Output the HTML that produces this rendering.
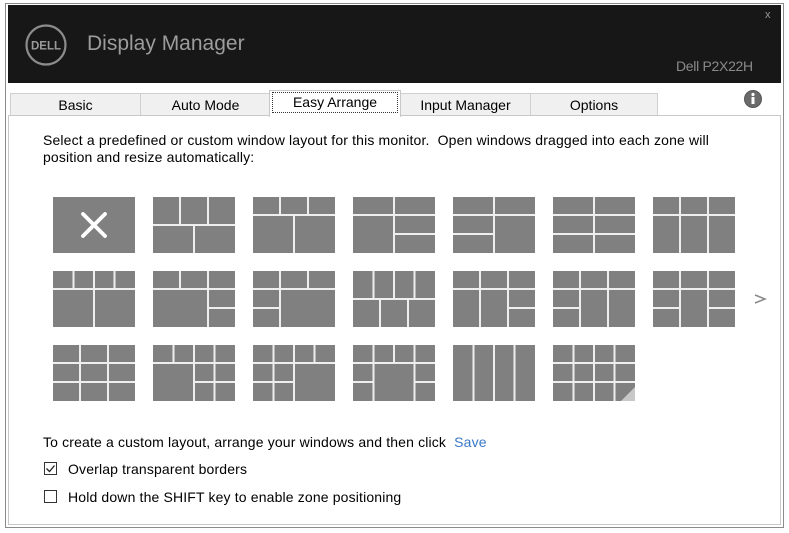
<!DOCTYPE html>
<html><head><meta charset="utf-8"><style>
body{margin:0;width:789px;height:533px;background:#fff;position:relative;overflow:hidden;font-family:"Liberation Sans",sans-serif;color:#000}
.a{position:absolute}
.win{left:5px;top:3px;width:777px;height:523px;border:1px solid #8a8a8a;background:#fff}
.hdr{left:8px;top:5px;width:773px;height:78px;background:#171717}
.tab{top:93px;height:22px;border:1px solid #d0d0d0;border-bottom:none;background:#f0f0f0;font-size:14px;text-align:center;line-height:22px;box-sizing:border-box}
.panel{left:8px;top:115px;width:773px;height:410px;border:1px solid #c8c8c8;box-sizing:border-box;background:#fff}
.t{font-size:14px;white-space:nowrap;letter-spacing:0.15px}
svg.tile{position:absolute}
.cb{width:13px;height:13px;border:1px solid #333;box-sizing:border-box;background:#fff}
</style></head><body>
<div class="a win"></div>
<div class="a hdr"></div>
<svg class="a" style="left:24px;top:23px" width="44" height="44"><circle cx="22" cy="22" r="19.5" fill="none" stroke="#8c8c8c" stroke-width="2.2"/><text x="22" y="26.5" text-anchor="middle" font-family="Liberation Sans" font-weight="bold" font-size="11.5" fill="#9a9a9a">DELL</text></svg>
<div class="a" style="left:87px;top:32px;font-size:21px;color:#9c9c9c">Display Manager</div>
<div class="a" style="left:676px;top:58px;font-size:14px;color:#8a8a8a;letter-spacing:-0.3px">Dell P2X22H</div>
<div class="a" style="left:765px;top:9px;font-size:11px;color:#999">x</div>

<div class="a tab" style="left:10px;width:131px">Basic</div>
<div class="a tab" style="left:140px;width:131px">Auto Mode</div>
<div class="a tab" style="left:400px;width:131px">Input Manager</div>
<div class="a tab" style="left:530px;width:128px">Options</div>
<div class="a" style="left:269px;top:90px;width:132px;height:27px;background:#fff;border:1px solid #c8c8c8;border-bottom:none;box-sizing:border-box;z-index:2"></div>
<div class="a" style="left:272px;top:92px;width:126px;height:21px;border:1px dotted #333;box-sizing:border-box;font-size:14px;text-align:center;line-height:19px;z-index:3">Easy Arrange</div>
<svg class="a" style="left:743px;top:89px" width="20" height="20"><circle cx="10" cy="10" r="9" fill="#555"/><circle cx="10" cy="10" r="8" fill="#6a6a6a"/><rect x="8.5" y="8" width="3" height="7" fill="#fff"/><circle cx="10" cy="5.5" r="1.6" fill="#fff"/></svg>
<div class="a panel"></div>

<div class="a t" style="left:43px;top:132px">Select a predefined or custom window layout for this monitor.&nbsp; Open windows dragged into each zone will</div>
<div class="a t" style="left:43px;top:149px">position and resize automatically:</div>

<svg class="tile" style="left:53px;top:197px" width="82" height="56"><rect width="82" height="56" fill="#808080"/><path d="M30 17L52 39M52 17L30 39" stroke="#fff" stroke-width="3.8" stroke-linecap="round"/></svg>
<svg class="tile" style="left:153px;top:197px" width="82" height="56"><rect width="82" height="56" fill="#808080"/><path d="M0 28H82M27 0V28M55 0V28M41 28V56" stroke="#eee" stroke-width="2"/></svg>
<svg class="tile" style="left:253px;top:197px" width="82" height="56"><rect width="82" height="56" fill="#808080"/><path d="M0 18H82M27 0V18M55 0V18M41 18V56" stroke="#eee" stroke-width="2"/></svg>
<svg class="tile" style="left:353px;top:197px" width="82" height="56"><rect width="82" height="56" fill="#808080"/><path d="M0 18H82M41 0V56M41 37H82" stroke="#eee" stroke-width="2"/></svg>
<svg class="tile" style="left:453px;top:197px" width="82" height="56"><rect width="82" height="56" fill="#808080"/><path d="M0 18H82M41 0V56M0 37H41" stroke="#eee" stroke-width="2"/></svg>
<svg class="tile" style="left:553px;top:197px" width="82" height="56"><rect width="82" height="56" fill="#808080"/><path d="M0 18H82M41 0V56M0 37H82" stroke="#eee" stroke-width="2"/></svg>
<svg class="tile" style="left:653px;top:197px" width="82" height="56"><rect width="82" height="56" fill="#808080"/><path d="M0 18H82M27 0V56M55 0V56" stroke="#eee" stroke-width="2"/></svg>

<svg class="tile" style="left:53px;top:271px" width="82" height="56"><rect width="82" height="56" fill="#808080"/><path d="M0 18H82M20.5 0V18M41 0V56M61.5 0V18" stroke="#eee" stroke-width="2"/></svg>
<svg class="tile" style="left:153px;top:271px" width="82" height="56"><rect width="82" height="56" fill="#808080"/><path d="M0 18H82M27 0V18M55 0V56M55 37H82" stroke="#eee" stroke-width="2"/></svg>
<svg class="tile" style="left:253px;top:271px" width="82" height="56"><rect width="82" height="56" fill="#808080"/><path d="M0 18H82M27 0V56M55 0V18M0 37H27" stroke="#eee" stroke-width="2"/></svg>
<svg class="tile" style="left:353px;top:271px" width="82" height="56"><rect width="82" height="56" fill="#808080"/><path d="M0 28H82M20.5 0V28M41 0V28M61.5 0V28M27 28V56M55 28V56" stroke="#eee" stroke-width="2"/></svg>
<svg class="tile" style="left:453px;top:271px" width="82" height="56"><rect width="82" height="56" fill="#808080"/><path d="M0 18H82M27 0V56M55 0V56M55 37H82" stroke="#eee" stroke-width="2"/></svg>
<svg class="tile" style="left:553px;top:271px" width="82" height="56"><rect width="82" height="56" fill="#808080"/><path d="M0 18H82M27 0V56M55 0V56M0 37H27" stroke="#eee" stroke-width="2"/></svg>
<svg class="tile" style="left:653px;top:271px" width="82" height="56"><rect width="82" height="56" fill="#808080"/><path d="M0 18H82M27 0V56M55 0V56M0 37H27M55 37H82" stroke="#eee" stroke-width="2"/></svg>
<svg class="a" style="left:753px;top:292px" width="14" height="14"><path d="M2 3L12 7L2 11" fill="none" stroke="#888" stroke-width="1.6"/></svg>

<svg class="tile" style="left:53px;top:345px" width="82" height="56"><rect width="82" height="56" fill="#808080"/><path d="M0 18H82M0 37H82M27 0V56M55 0V56" stroke="#eee" stroke-width="2"/></svg>
<svg class="tile" style="left:153px;top:345px" width="82" height="56"><rect width="82" height="56" fill="#808080"/><path d="M0 18H82M20.5 0V18M41 0V56M61.5 0V56M41 37H82" stroke="#eee" stroke-width="2"/></svg>
<svg class="tile" style="left:253px;top:345px" width="82" height="56"><rect width="82" height="56" fill="#808080"/><path d="M0 18H82M20.5 0V56M41 0V56M61.5 0V18M0 37H41" stroke="#eee" stroke-width="2"/></svg>
<svg class="tile" style="left:353px;top:345px" width="82" height="56"><rect width="82" height="56" fill="#808080"/><path d="M0 18H82M20.5 0V56M41 0V18M61.5 0V56M0 37H20.5M61.5 37H82" stroke="#eee" stroke-width="2"/></svg>
<svg class="tile" style="left:453px;top:345px" width="82" height="56"><rect width="82" height="56" fill="#808080"/><path d="M20.5 0V56M41 0V56M61.5 0V56" stroke="#eee" stroke-width="2"/></svg>
<svg class="tile" style="left:553px;top:345px" width="82" height="56"><rect width="82" height="56" fill="#808080"/><path d="M0 18H82M0 37H82M20.5 0V56M41 0V56M61.5 0V56" stroke="#eee" stroke-width="2"/><path d="M82 42V56H68Z" fill="#c8c8c8"/></svg>

<div class="a t" style="left:43px;top:434px">To create a custom layout, arrange your windows and then click&nbsp;&nbsp;<span style="color:#3a78c8">Save</span></div>
<div class="a cb" style="left:44px;top:462px"></div>
<svg class="a" style="left:44px;top:462px" width="13" height="13"><path d="M2.5 6.5L5.5 9.5L10.5 3.5" fill="none" stroke="#222" stroke-width="1.3"/></svg>
<div class="a t" style="left:68px;top:461px">Overlap transparent borders</div>
<div class="a cb" style="left:44px;top:490px"></div>
<div class="a t" style="left:68px;top:489px">Hold down the SHIFT key to enable zone positioning</div>
</body></html>
